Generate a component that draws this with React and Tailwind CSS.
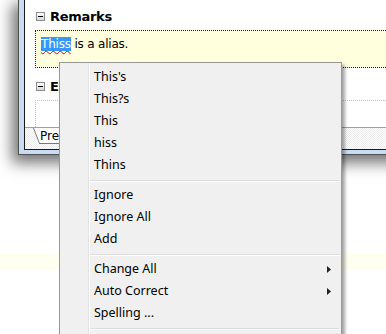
import React from "react";

const suggestions = ["This's", "This?s", "This", "hiss", "Thins"];
const actions = ["Ignore", "Ignore All", "Add"];
const tools = [
  { label: "Change All", sub: true },
  { label: "Auto Correct", sub: true },
  { label: "Spelling ...", sub: false },
];

function MinusBox() {
  return (
    <div className="w-[9px] h-[9px] ml-px border border-[#8c8c8c] bg-linear-to-b from-white to-[#d8d8d8] flex items-center justify-center">
      <div className="w-[5px] h-px bg-black" />
    </div>
  );
}

function Separator() {
  return (
    <div className="h-[8px] pt-[4px] mr-[2px]">
      <div className="h-px bg-[#dcdcdc]" />
      <div className="h-px bg-white" />
    </div>
  );
}

function MenuItem({ label, sub }) {
  return (
    <div className="h-[22px] flex items-center justify-between pl-[4px] pr-[10px] text-black leading-[22px]">
      <span>{label}</span>
      {sub && (
        <svg width="4" height="7" viewBox="0 0 4 7">
          <polygon points="0,0 4,3.5 0,7" fill="#222" />
        </svg>
      )}
    </div>
  );
}

export default function App() {
  return (
    <div className="relative w-[386px] h-[334px] overflow-hidden bg-white font-['DejaVu_Sans',sans-serif]">
      {/* Window */}
      <div className="ml-[18px] w-[420px] h-[155px] border-l border-b border-[#505050] bg-[#c9dcf2] pl-[5px] pb-[4px] shadow-[-4px_6px_14px_2px_rgba(0,0,0,0.55)]">
        <div className="h-full border-l border-b border-[#1a1a1a] bg-white flex flex-col">
          <div className="pl-[10px] flex flex-col">
            {/* Remarks header */}
            <div className="mt-[8px] h-[17px] flex items-center gap-[5px]">
              <MinusBox />
              <span className="font-bold text-[13px] tracking-[-0.3px] leading-[17px] text-black">
                Remarks
              </span>
            </div>

            {/* Remarks body */}
            <div className="mt-[5px] h-[38px] border border-dotted border-[#141466] bg-[#ffffdd] pl-[5px] pt-[6px] text-[12px] tracking-[-0.2px] leading-[14px] text-black">
              <span className="bg-[#3399ff] text-white underline decoration-wavy decoration-[#e00000] decoration-1 underline-offset-[2px]">
                Thiss
              </span>{" "}
              is a alias.
            </div>

            {/* Example header */}
            <div className="mt-[10px] h-[17px] flex items-center gap-[5px]">
              <MinusBox />
              <span className="font-bold text-[13px] tracking-[-0.3px] leading-[17px] text-black">
                Example
              </span>
            </div>

            {/* Example body */}
            <div className="mt-[5px] h-[27px] border-t border-l border-dotted border-[#c4c4c4]" />
          </div>

          {/* Tab strip */}
          <div className="flex-1 border-t border-[#a0a0a0] bg-[image:repeating-conic-gradient(#ececec_0_25%,#ffffff_0_50%)] bg-[length:2px_2px] pl-[8px]">
            <div className="flex">
              <svg width="7" height="16" viewBox="0 0 7 16">
                <path d="M0 0 L7 0 L7 16 L6 16 Z" fill="#fff" />
                <line x1="0.5" y1="0" x2="6.5" y2="15.5" stroke="#7a7a7a" strokeWidth="1" />
                <line x1="6" y1="15.5" x2="7" y2="15.5" stroke="#7a7a7a" strokeWidth="1" />
              </svg>
              <div className="h-[16px] w-[70px] bg-white border-b border-r border-[#7a7a7a] pt-px text-[12px] leading-[14px] text-black">
                Preview
              </div>
            </div>
          </div>
        </div>
      </div>

      {/* Faint row behind */}
      <div className="mt-[98px] h-[17px] bg-[#fffff0]" />

      {/* Context menu */}
      <div className="absolute left-[59px] top-[62px] w-[283px] h-[290px] border border-[#979797] bg-[#f0f0f0] shadow-[3px_3px_3px_rgba(0,0,0,0.35)] flex font-['Noto_Sans',sans-serif] text-[12.5px]">
        <div className="w-[28px]" />
        <div className="w-px bg-[#e2e3e3]" />
        <div className="w-px bg-white" />
        <div className="flex-1 pt-[3px] flex flex-col">
          {suggestions.map((s) => (
            <MenuItem key={s} label={s} />
          ))}
          <Separator />
          {actions.map((s) => (
            <MenuItem key={s} label={s} />
          ))}
          <Separator />
          {tools.map((t) => (
            <MenuItem key={t.label} label={t.label} sub={t.sub} />
          ))}
          <Separator />
        </div>
      </div>
    </div>
  );
}
